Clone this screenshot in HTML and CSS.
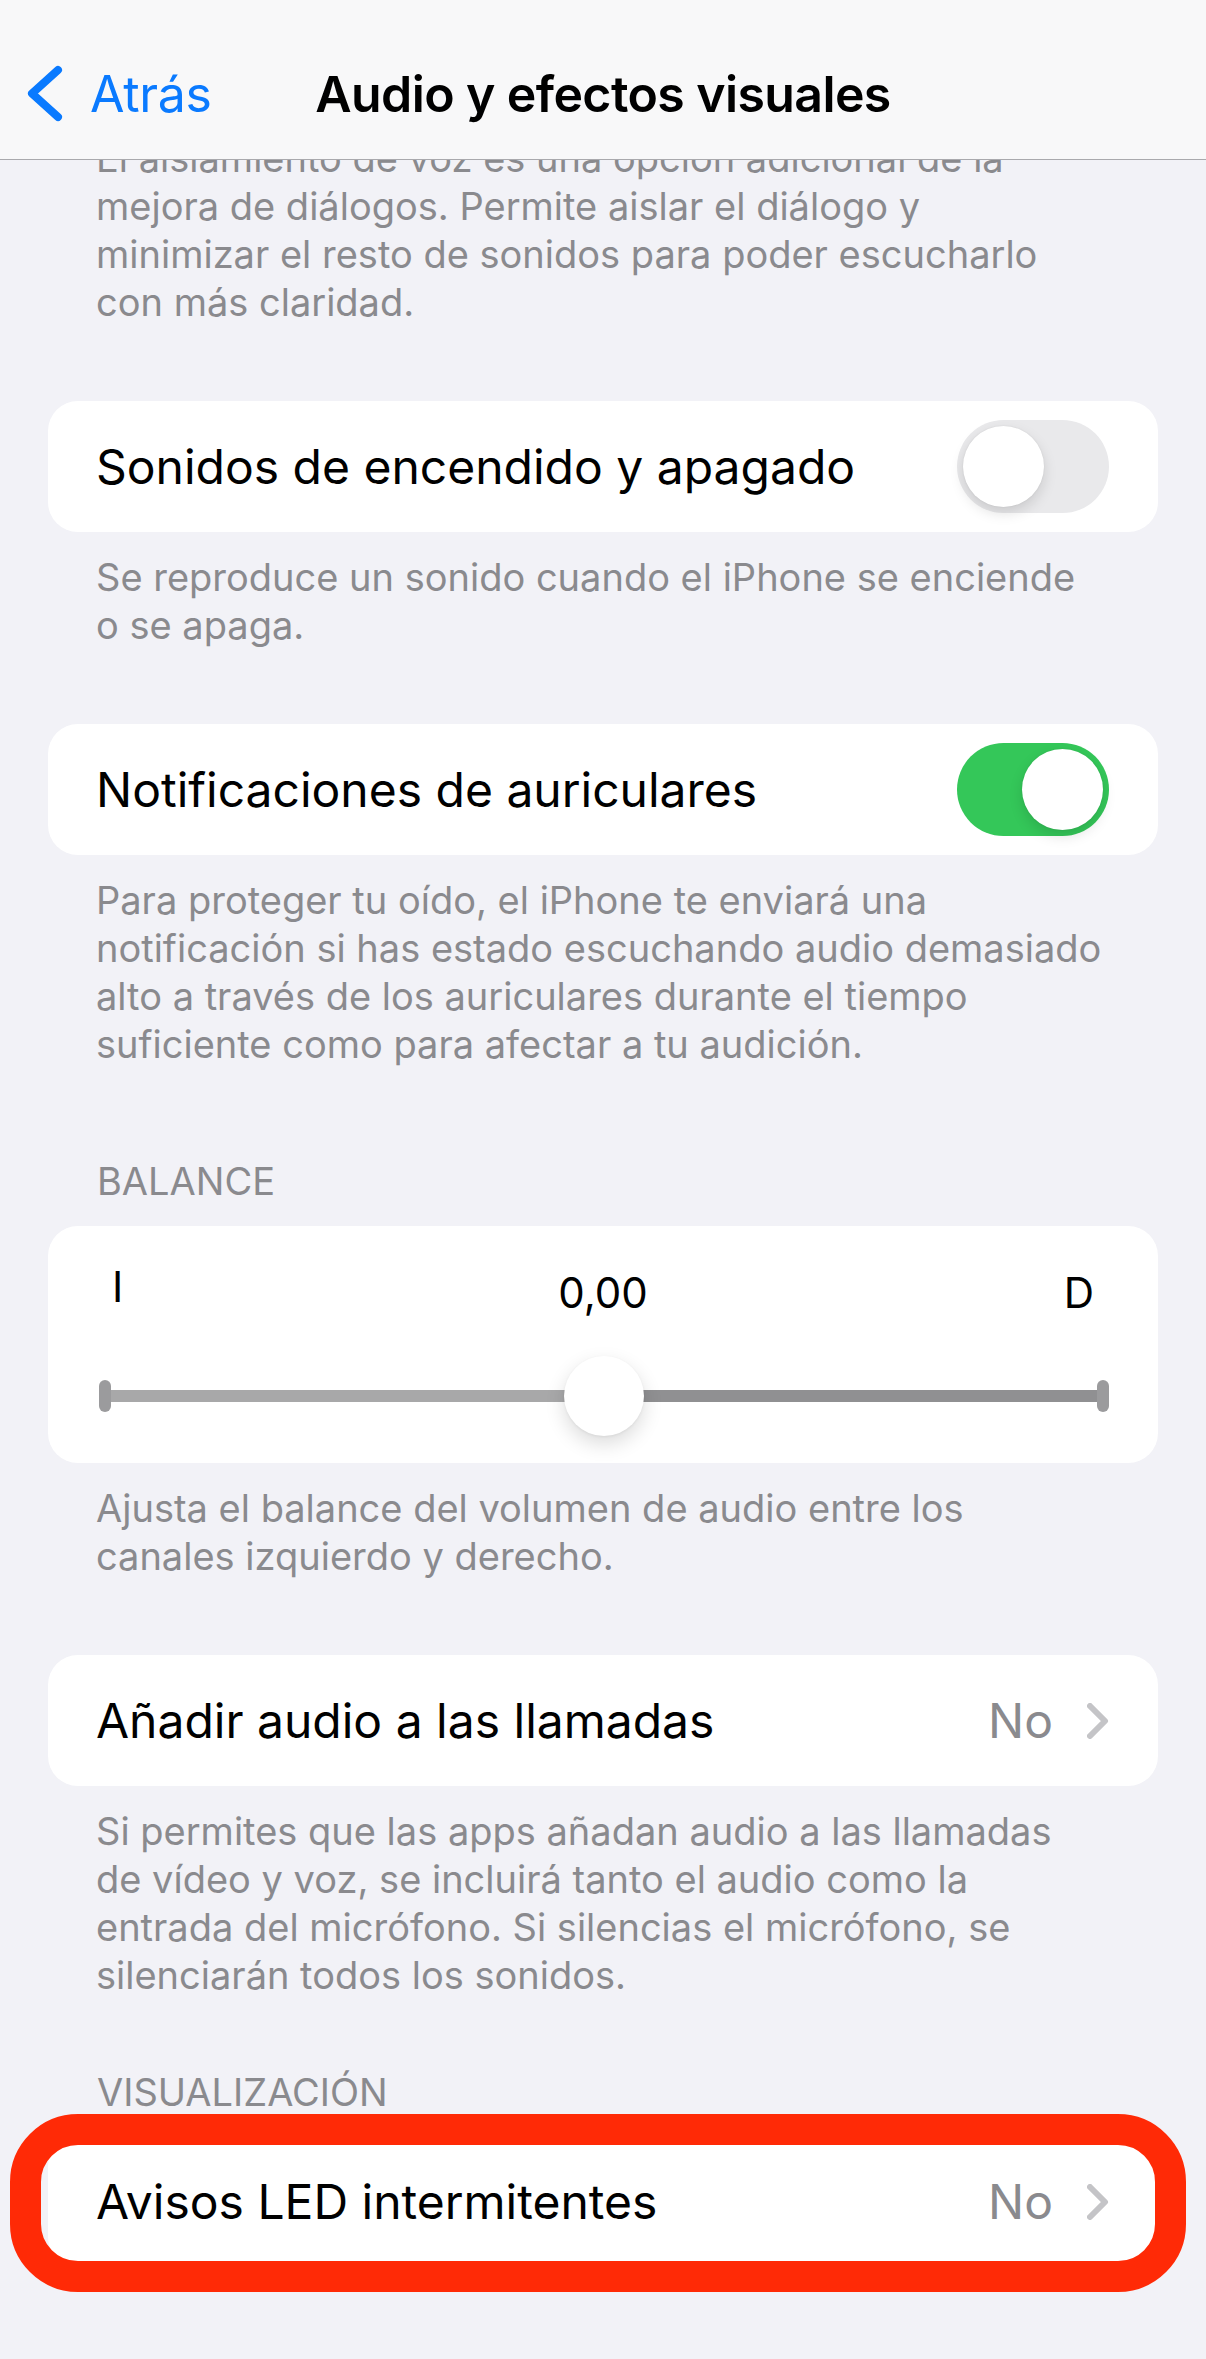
FILE: index.html
```html
<!DOCTYPE html>
<html lang="es">
<head>
  <meta charset="UTF-8" />
  <meta name="viewport" content="width=device-width, initial-scale=1.0"/>
  <title>Audio y efectos visuales</title>
  <link rel="stylesheet" href="styles.css">
</head>
<body>

<div class="screen">

  <!-- Barra de navegación -->
  <header class="navbar">
    <a class="back" href="#">
      <svg class="back-icon" width="42" height="63" viewBox="0 0 42 63">
        <polyline points="34,8 8,31.5 34,55" fill="none" stroke="#0a7aff" stroke-width="8" stroke-linecap="round" stroke-linejoin="round"/>
      </svg>
      <span>Atrás</span>
    </a>
    <h1 class="nav-title">Audio y efectos visuales</h1>
    <span></span>
  </header>

  <main class="content">
    <p class="note note-top">
      El aislamiento de voz es una opción adicional de la<br>
      mejora de diálogos. Permite aislar el diálogo y<br>
      minimizar el resto de sonidos para poder escucharlo<br>
      con más claridad.
    </p>

    <div class="group">
      <div class="row">
        <span class="row-label">Sonidos de encendido y apagado</span>
        <span class="switch"><span class="knob"></span></span>
      </div>
    </div>
    <p class="note">
      Se reproduce un sonido cuando el iPhone se enciende<br>
      o se apaga.
    </p>

    <div class="group">
      <div class="row">
        <span class="row-label">Notificaciones de auriculares</span>
        <span class="switch on"><span class="knob"></span></span>
      </div>
    </div>
    <p class="note">
      Para proteger tu oído, el iPhone te enviará una<br>
      notificación si has estado escuchando audio demasiado<br>
      alto a través de los auriculares durante el tiempo<br>
      suficiente como para afectar a tu audición.
    </p>

    <h2 class="section-head head-balance">BALANCE</h2>
    <div class="group balance">
      <div class="balance-labels">
        <span class="label-left">I</span>
        <span>0,00</span>
        <span class="label-right">D</span>
      </div>
      <div class="slider">
        <span class="slider-cap"></span>
        <span class="track track-left"></span>
        <span class="track track-right"></span>
        <span class="slider-cap"></span>
        <span class="slider-knob"></span>
      </div>
    </div>
    <p class="note">
      Ajusta el balance del volumen de audio entre los<br>
      canales izquierdo y derecho.
    </p>

    <div class="group">
      <div class="row">
        <span class="row-label">Añadir audio a las llamadas</span>
        <span class="row-value">No</span>
        <svg class="disclosure" width="22" height="36" viewBox="0 0 22 36">
          <polyline points="3,3 18,18 3,33" fill="none" stroke="#c4c4c7" stroke-width="6" stroke-linecap="round" stroke-linejoin="round"/>
        </svg>
      </div>
    </div>
    <p class="note">
      Si permites que las apps añadan audio a las llamadas<br>
      de vídeo y voz, se incluirá tanto el audio como la<br>
      entrada del micrófono. Si silencias el micrófono, se<br>
      silenciarán todos los sonidos.
    </p>

    <h2 class="section-head head-display">VISUALIZACIÓN</h2>
    <div class="group highlighted">
      <div class="row">
        <span class="row-label">Avisos LED intermitentes</span>
        <span class="row-value">No</span>
        <svg class="disclosure" width="22" height="36" viewBox="0 0 22 36">
          <polyline points="3,3 18,18 3,33" fill="none" stroke="#c4c4c7" stroke-width="6" stroke-linecap="round" stroke-linejoin="round"/>
        </svg>
      </div>
      <span class="marker"></span>
    </div>
  </main>

</div>

</body>
</html>
```

FILE: styles.css
```css
:root {
  --bg: #f2f2f7;
  --card: #fff;
  --blue: #0a7aff;
  --green: #34c759;
  --gray-text: #8a8a8e;
  --red-mark: #ff2a06;
}

* {
  box-sizing: border-box;
}

body {
  margin: 0;
  background-color: var(--bg);
  font-family: Inter, "Noto Sans", sans-serif;
  color: #000;
}

.screen {
  position: relative;
  width: 1206px;
  min-height: 2359px;
  overflow: hidden;
}

/* nav bar sits over the scrolled content */
.navbar {
  position: absolute;
  top: 0;
  left: 0;
  right: 0;
  z-index: 2;
  height: 160px;
  padding-top: 28px;
  display: grid;
  grid-template-columns: 1fr auto 1fr;
  align-items: center;
  background-color: #f8f8f9;
  border-bottom: 1px solid #a9a9ad;
}

.back {
  display: flex;
  align-items: center;
  gap: 24px;
  margin-left: 24px;
  color: var(--blue);
  text-decoration: none;
  font-size: 50px;
  letter-spacing: -0.3px;
}

.back-icon {
  display: block;
}

.nav-title {
  margin: 0;
  font-size: 50px;
  font-weight: 600;
  letter-spacing: -0.6px;
}

.content {
  padding-top: 134px;
  padding-bottom: 80px;
}

.note {
  margin: 21px 0 0;
  padding: 0 96px;
  font-size: 38px;
  line-height: 48px;
  color: var(--gray-text);
  white-space: nowrap;
}

.note-top {
  margin-top: 0;
}

.group {
  position: relative;
  margin: 75px 48px 0;
  background-color: var(--card);
  border-radius: 30px;
}

.section-head {
  margin: 0 0 22px;
  padding: 0 97px;
  font-size: 38px;
  line-height: 46px;
  font-weight: 400;
  color: var(--gray-text);
}

.head-balance {
  margin-top: 90px;
}

.head-display {
  margin-top: 70px;
  margin-bottom: 21px;
}

.section-head + .group {
  margin-top: 0;
}

.row {
  display: flex;
  align-items: center;
  height: 131px;
  padding: 0 49px 0 48px;
  font-size: 48px;
}

.row-label {
  flex: 1;
}

.row-value {
  color: var(--gray-text);
  margin-right: 34px;
}

.disclosure {
  display: block;
}

/* switches */
.switch {
  display: flex;
  align-items: center;
  width: 152px;
  height: 93px;
  padding: 0 6px;
  border-radius: 47px;
  background-color: #e9e9eb;
}

.switch .knob {
  width: 81px;
  height: 81px;
  border-radius: 50%;
  background-color: #fff;
  box-shadow: 0 6px 14px rgba(0, 0, 0, 0.13), 0 0 2px rgba(0, 0, 0, 0.08);
}

.switch.on {
  background-color: var(--green);
  justify-content: flex-end;
}

/* balance slider */
.balance {
  padding: 42px 49px 27px 51px;
}

.balance-labels {
  display: grid;
  grid-template-columns: 1fr auto 1fr;
  align-items: start;
  padding: 0 15px 0 13px;
  font-size: 42px;
  line-height: 50px;
}

.label-left {
  margin-top: -6px;
}

.label-right {
  justify-self: end;
}

.slider {
  position: relative;
  display: flex;
  align-items: center;
  height: 80px;
  margin-top: 38px;
}

.slider-cap {
  width: 12px;
  height: 32px;
  border-radius: 6px;
  background-color: #9b9b9d;
}

.track {
  flex: 1;
  height: 12px;
}

.track-left {
  background-color: #a8a8a9;
}

.track-right {
  background-color: #909092;
}

.slider-knob {
  position: absolute;
  top: 0;
  left: 50%;
  width: 80px;
  height: 80px;
  margin-left: -40px;
  border-radius: 50%;
  background-color: #fff;
  box-shadow: 0 8px 20px rgba(0, 0, 0, 0.14), 0 1px 3px rgba(0, 0, 0, 0.06);
}

/* red hand-drawn highlight */
.highlighted {
  margin-bottom: 90px;
}

.marker {
  position: absolute;
  top: -22px;
  bottom: -25px;
  left: -38px;
  right: -28px;
  border: 31px solid var(--red-mark);
  border-radius: 68px;
  pointer-events: none;
}
```
